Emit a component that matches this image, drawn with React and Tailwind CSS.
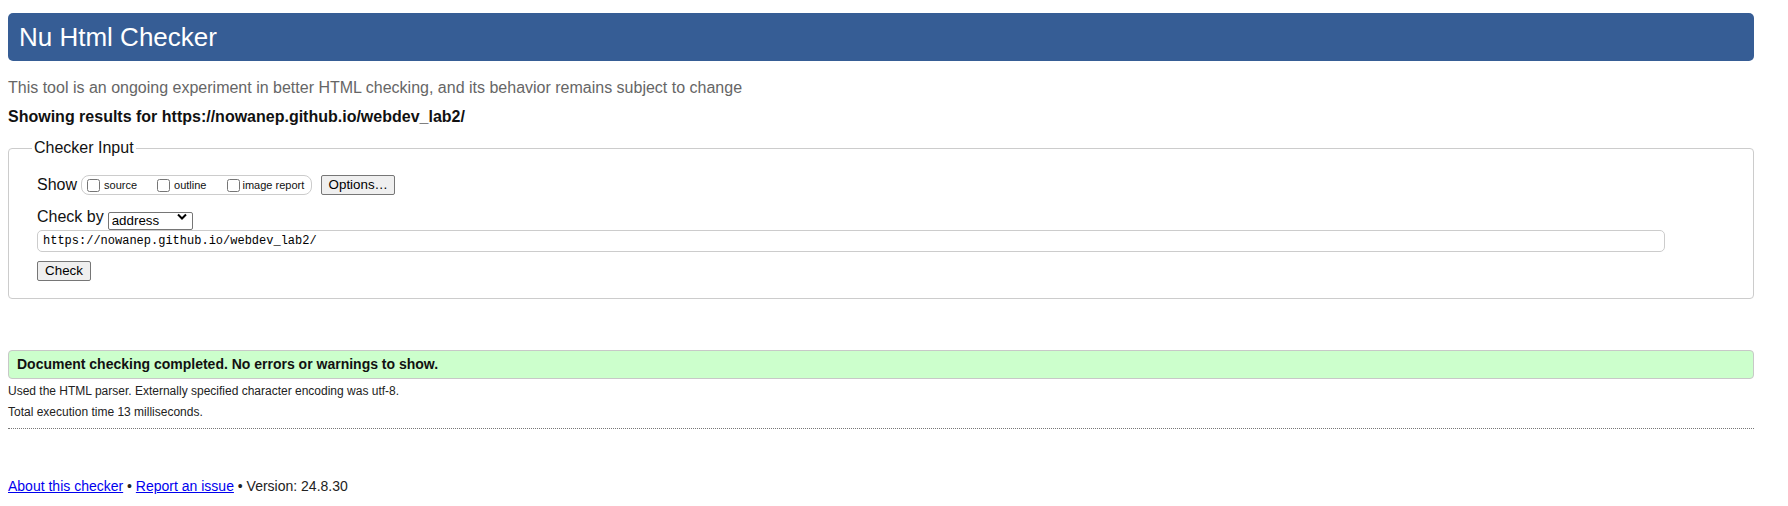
import { useState } from 'react';

export default function App() {
    const [url, setUrl] = useState('https://nowanep.github.io/webdev_lab2/');
    const [show, setShow] = useState({ source: false, outline: false, images: false });

    const toggle = (k) => setShow(s => ({ ...s, [k]: !s[k] }));

    return (
        <div className="min-h-screen bg-white pl-[8px] pr-[34px] pt-[13px] font-['Liberation_Sans',Arial,sans-serif] text-[#111]">
            <h1 className="flex h-[48px] items-center rounded-[5px] bg-[#365d95] pl-[11px] text-[26px] font-normal text-white">
                Nu Html Checker
            </h1>

            <p className="mt-[18px] text-[16px] leading-[18px] text-[#666]">
                This tool is an ongoing experiment in better HTML checking, and its behavior remains subject to change
            </p>
            <p className="mt-[11px] text-[16px] font-bold leading-[18px] text-[#111]">
                Showing results for https://nowanep.github.io/webdev_lab2/
            </p>

            {/* Checker input */}
            <fieldset className="mt-[13px] rounded-[4px] border border-[#ccc] pb-[17px] pl-[28px] pr-[88px]">
                <legend className="-ml-[5px] px-[2px] text-[16px] leading-[18px]">Checker Input</legend>

                <div className="mt-[18px] flex h-[20px] items-center">
                    <span className="text-[16px] leading-[18px]">Show</span>
                    <div className="ml-[4px] flex h-[20px] items-center rounded-[8px] border border-[#ccc] pl-[5px] pr-[7px] text-[11px]">
                        <label className="flex items-center">
                            <input type="checkbox" checked={show.source} onChange={() => toggle('source')}
                                className="m-0 h-[13px] w-[13px]" />
                            <span className="ml-[4px]">source</span>
                        </label>
                        <label className="ml-[20px] flex items-center">
                            <input type="checkbox" checked={show.outline} onChange={() => toggle('outline')}
                                className="m-0 h-[13px] w-[13px]" />
                            <span className="ml-[4px]">outline</span>
                        </label>
                        <label className="ml-[21px] flex items-center">
                            <input type="checkbox" checked={show.images} onChange={() => toggle('images')}
                                className="m-0 h-[13px] w-[13px]" />
                            <span className="ml-[2px]">image report</span>
                        </label>
                    </div>
                    <button className="ml-[9px] h-[20px] w-[74px] rounded-[2px] border border-[#767676] bg-[#efefef] text-[13.33px] leading-[16px] text-black">
                        Options…
                    </button>
                </div>

                <div className="mt-[12px] flex h-[19px] items-center">
                    <span className="text-[16px] leading-[18px]">Check by</span>
                    <div className="relative ml-[4px] h-[18px] w-[85px]">
                        <select className="h-[18px] w-[85px] appearance-none rounded-[2px] border border-[#767676] bg-white pl-[3px] text-[13.33px] leading-[16px] text-black">
                            <option>address</option>
                            <option>file upload</option>
                            <option>text input</option>
                        </select>
                        <svg className="pointer-events-none absolute right-[6px] top-[5px]" width="10" height="7" viewBox="0 0 10 7">
                            <path d="M1 1.5 L5 5.5 L9 1.5" fill="none" stroke="#000" strokeWidth="2" />
                        </svg>
                    </div>
                </div>

                <input value={url} onChange={e => setUrl(e.target.value)}
                    className="mt-[4px] block h-[22px] w-full rounded-[5px] border border-[#ccc] bg-white pl-[5px] font-['Liberation_Mono','DejaVu_Sans_Mono',monospace] text-[12px] text-black focus:outline-none" />

                <button className="mt-[9px] block h-[20px] w-[54px] rounded-[2px] border border-[#767676] bg-[#efefef] text-[13.33px] leading-[16px] text-black">
                    Check
                </button>
            </fieldset>

            {/* Results */}
            <div className="mt-[51px] flex h-[29px] items-center rounded-[4px] border border-[#c8c8c8] bg-[#ccffcc] pl-[8px] text-[14px] font-bold text-[#111]">
                Document checking completed. No errors or warnings to show.
            </div>
            <p className="mt-[5px] text-[12px] leading-[14px] text-[#222]">
                Used the HTML parser. Externally specified character encoding was utf-8.
            </p>
            <p className="mt-[7px] text-[12px] leading-[14px] text-[#222]">
                Total execution time 13 milliseconds.
            </p>
            <hr className="mt-[9px] border-0 border-t border-dotted border-[#777]" />

            <p className="mt-[49px] pb-[12px] text-[14px] leading-[16px] text-[#222]">
                <a href="#" className="text-[#0000ee] underline">About this checker</a>
                {' • '}
                <a href="#" className="text-[#0000ee] underline">Report an issue</a>
                {' • Version: 24.8.30'}
            </p>
        </div>
    );
}
